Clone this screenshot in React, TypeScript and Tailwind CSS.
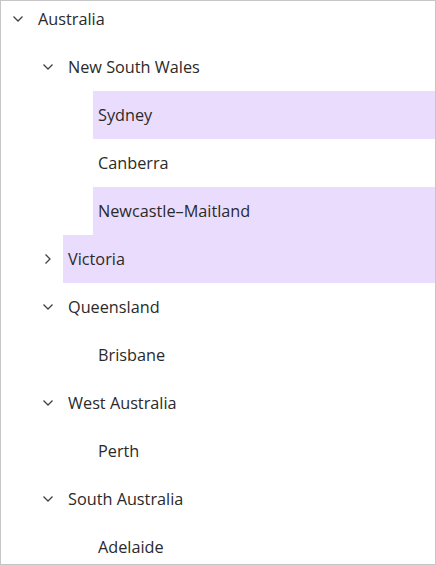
import React from "react";

type Node = { label: string; level: number; expanded?: boolean; hasChildren?: boolean; selected?: boolean };

const rows: Node[] = [
  { label: "Australia", level: 0, hasChildren: true, expanded: true },
  { label: "New South Wales", level: 1, hasChildren: true, expanded: true },
  { label: "Sydney", level: 2, selected: true },
  { label: "Canberra", level: 2 },
  { label: "Newcastle–Maitland", level: 2, selected: true },
  { label: "Victoria", level: 1, hasChildren: true, expanded: false, selected: true },
  { label: "Queensland", level: 1, hasChildren: true, expanded: true },
  { label: "Brisbane", level: 2 },
  { label: "West Australia", level: 1, hasChildren: true, expanded: true },
  { label: "Perth", level: 2 },
  { label: "South Australia", level: 1, hasChildren: true, expanded: true },
  { label: "Adelaide", level: 2 },
];

const indent: Record<number, string> = { 0: "pl-0", 1: "pl-[30px]", 2: "pl-[60px]" };

function Chevron({ expanded }: { expanded: boolean }) {
  return expanded ? (
    <svg width="12" height="12" viewBox="0 0 12 12" className="text-[#424242]">
      <path d="M1.5 3.5 L6 8 L10.5 3.5" fill="none" stroke="currentColor" strokeWidth="1.3" />
    </svg>
  ) : (
    <svg width="12" height="12" viewBox="0 0 12 12" className="text-[#424242]">
      <path d="M3.5 1.5 L8 6 L3.5 10.5" fill="none" stroke="currentColor" strokeWidth="1.3" />
    </svg>
  );
}

export default function App() {
  return (
    <div className="w-[436px] h-[565px] border border-[#c6c6c6] bg-white overflow-hidden" style={{ fontFamily: '"Open Sans", "Noto Sans", sans-serif' }}>
      <div className="-mt-[6px] flex flex-col">
        {rows.map((r, i) => (
          <div key={i} className={`flex h-[48px] items-stretch ${indent[r.level]}`}>
            <div className="w-[32px] shrink-0 flex items-center justify-center pl-[1px]">
              {r.hasChildren ? <Chevron expanded={!!r.expanded} /> : null}
            </div>
            <div className={`flex-1 flex items-center pl-[5px] text-[16.25px] text-[#2a2a2a] ${r.selected ? "bg-[#eadcfd]" : ""}`}>
              {r.label}
            </div>
          </div>
        ))}
      </div>
    </div>
  );
}
